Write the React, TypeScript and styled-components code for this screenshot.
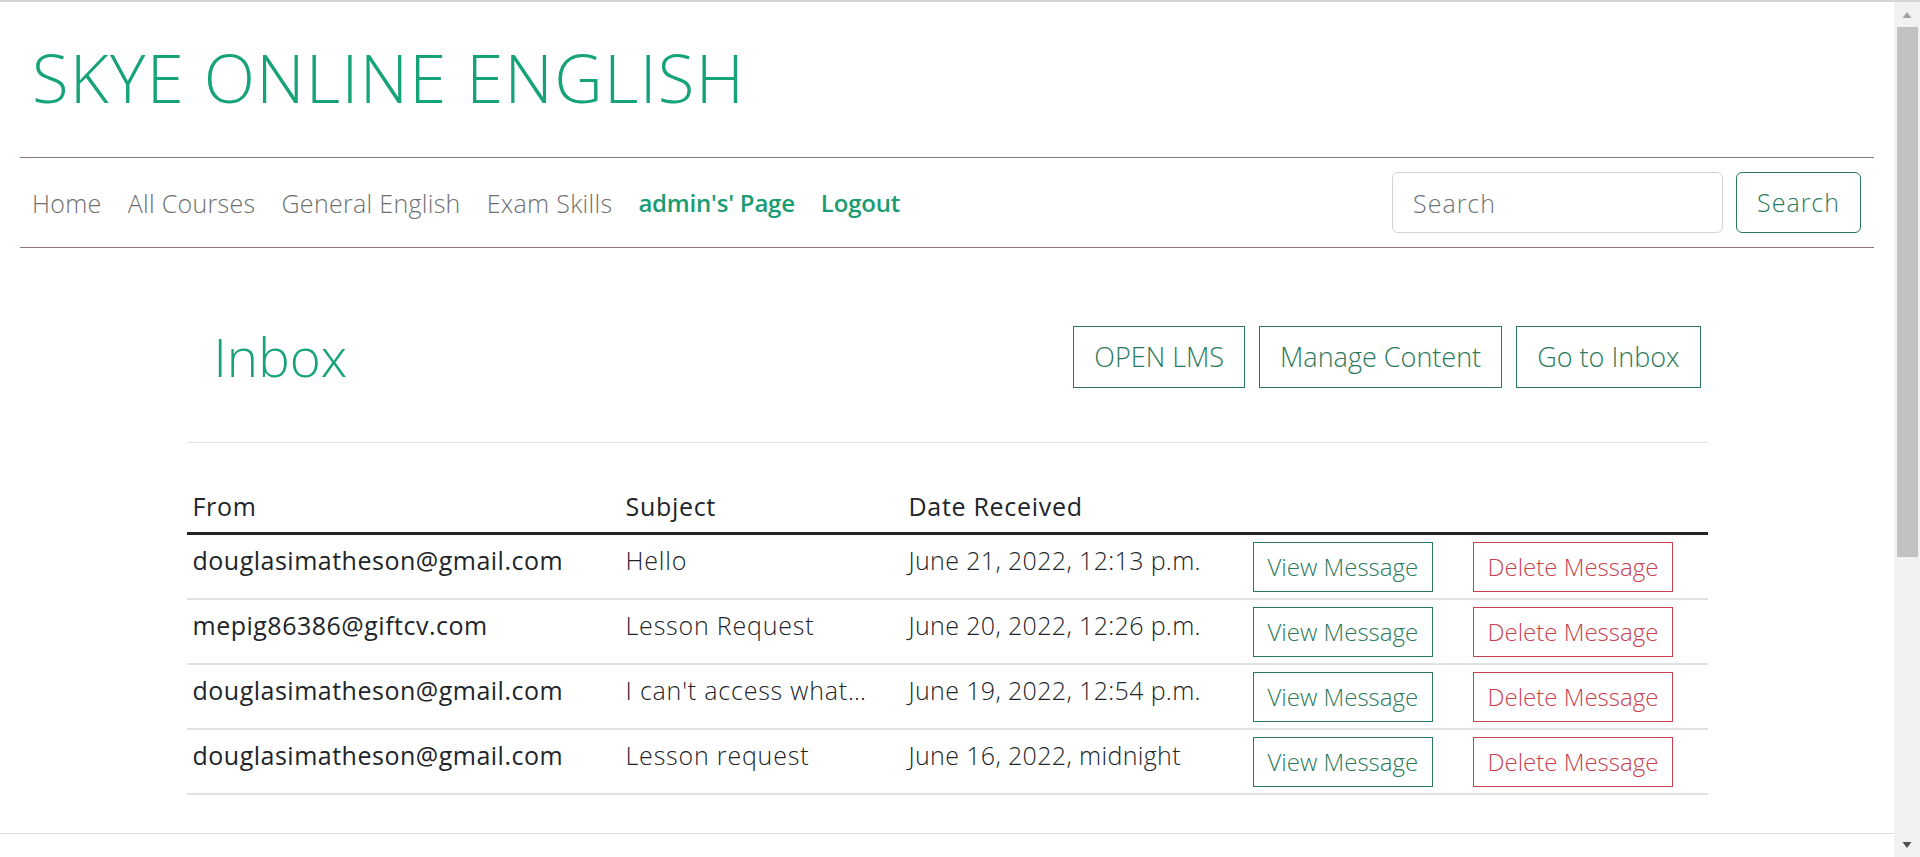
import React from "react";
import styled, { createGlobalStyle } from "styled-components";

const GlobalStyle = createGlobalStyle`
  html, body {
    margin: 0;
    padding: 0;
    overflow: hidden;
    background: #ffffff;
  }
  body {
    font-family: "Open Sans", "Liberation Sans", sans-serif;
    color: #212529;
  }
  * { box-sizing: border-box; }
`;

const Frame = styled.div`
  display: flex;
  width: 1920px;
  height: 857px;
  border-top: 2px solid #d3d3da;
  overflow: hidden;
`;

const Page = styled.div`
  flex: 1;
  min-width: 0;
  display: flex;
  flex-direction: column;
`;

const Header = styled.header`
  padding: 0 20px;
`;

const Title = styled.h1`
  margin: 0;
  padding: 35px 0 40px 12px;
  font-size: 67px;
  line-height: 80px;
  font-weight: 300;
  color: #17a37a;
  letter-spacing: 1.3px;
`;

const NavBar = styled.nav`
  display: flex;
  align-items: center;
  justify-content: space-between;
  height: 91px;
  padding: 0 13px 0 12px;
  border-top: 1px solid #8e7384;
  border-bottom: 1px solid #8e7384;
`;

const NavLinks = styled.div`
  display: flex;
  align-items: center;
  gap: 26px;
`;

const NavLink = styled.a<{ $active?: boolean }>`
  font-size: ${(p) => (p.$active ? "24px" : "25px")};
  line-height: 36px;
  font-weight: ${(p) => (p.$active ? 600 : 300)};
  color: ${(p) => (p.$active ? "#1a9c72" : "#707070")};
  text-decoration: none;
  letter-spacing: ${(p) => (p.$active ? "-0.2px" : "0.3px")};
`;

const SearchForm = styled.form`
  display: flex;
  align-items: center;
  gap: 13px;
`;

const SearchInput = styled.input`
  width: 331px;
  height: 61px;
  padding: 12px 20px;
  font-family: inherit;
  font-size: 25px;
  font-weight: 300;
  letter-spacing: 1px;
  border: 1px solid #d0d4d8;
  border-radius: 6px;
  outline: none;
  color: #212529;
  &::placeholder {
    color: #6c757d;
  }
`;

const OutlineButton = styled.button<{ $tone?: "green" | "red"; $variant?: "search" | "action" | "row" }>`
  font-family: inherit;
  font-weight: 300;
  background: #fff;
  color: ${(p) => (p.$tone === "red" ? "#c9404f" : "#2b7a5b")};
  border: 1px solid ${(p) => (p.$tone === "red" ? "#c9404f" : "#2b7a5b")};
  white-space: nowrap;
  cursor: pointer;
  ${(p) =>
    p.$variant === "search"
      ? `font-size: 25px; line-height: 37px; letter-spacing: 1px; padding: 11px 20px; border-radius: 6px;`
      : p.$variant === "row"
      ? `font-size: 24px; line-height: 36px; padding: 6px 14px; border-radius: 0;`
      : `font-size: 27px; line-height: 40px; padding: 10px 20px; border-radius: 0;`}
`;

const Main = styled.main`
  width: 1521px;
  margin: 0 auto;
`;

const TopRow = styled.div`
  display: flex;
  align-items: center;
  justify-content: space-between;
  padding: 78px 7px 0 27px;
`;

const Heading = styled.h2`
  margin: 0;
  font-size: 53px;
  line-height: 62px;
  font-weight: 300;
  color: #17a37a;
`;

const ActionGroup = styled.div`
  display: flex;
  gap: 14px;
`;

const Divider = styled.hr`
  margin: 54px 0 37px;
  border: 0;
  border-top: 1px solid #e2e2e2;
`;

const Table = styled.table`
  width: 100%;
  border-collapse: collapse;
  table-layout: fixed;
`;

const Th = styled.th`
  text-align: left;
  padding: 8px 6px 8px;
  font-size: 25px;
  line-height: 36px;
  font-weight: 500;
  letter-spacing: 0.7px;
  color: #212529;
  border-bottom: 3px solid #212529;
`;

const Td = styled.td<{ $kind?: "email" | "text" | "date" | "action" }>`
  vertical-align: top;
  padding: 7px 6px 6px;
  font-size: 25px;
  line-height: 36px;
  font-weight: ${(p) => (p.$kind === "email" ? 500 : 300)};
  letter-spacing: ${(p) => (p.$kind === "email" ? "0.5px" : p.$kind === "date" ? "0.35px" : "0.8px")};
  color: #212529;
  border-bottom: 2px solid #dee2e6;
  white-space: nowrap;
`;

const Clip = styled.span`
  display: inline-block;
  max-width: 245px;
  overflow: hidden;
  text-overflow: ellipsis;
  white-space: nowrap;
  vertical-align: top;
`;

const Footer = styled.footer`
  margin-top: 38px;
  border-top: 1px solid #e0e0e0;
  flex: 1;
`;

const Scrollbar = styled.div`
  width: 26px;
  flex: none;
  display: flex;
  flex-direction: column;
  align-items: center;
  background: #f1f1f1;
`;

const ArrowBox = styled.div`
  width: 100%;
  height: 25px;
  display: flex;
  align-items: center;
  justify-content: center;
  flex: none;
`;

const Thumb = styled.div`
  width: 21px;
  height: 530px;
  background: #c1c1c1;
  flex: none;
`;

const Track = styled.div`
  flex: 1;
`;

const messages = [
  { from: "douglasimatheson@gmail.com", subject: "Hello", date: "June 21, 2022, 12:13 p.m." },
  { from: "mepig86386@giftcv.com", subject: "Lesson Request", date: "June 20, 2022, 12:26 p.m." },
  { from: "douglasimatheson@gmail.com", subject: "I can't access what…", date: "June 19, 2022, 12:54 p.m." },
  { from: "douglasimatheson@gmail.com", subject: "Lesson request", date: "June 16, 2022, midnight" },
];

export default function App() {
  return (
    <>
      <GlobalStyle />
      <Frame>
        <Page>
          <Header>
            <Title>SKYE ONLINE ENGLISH</Title>
            <NavBar>
              <NavLinks>
                <NavLink href="#">Home</NavLink>
                <NavLink href="#">All Courses</NavLink>
                <NavLink href="#">General English</NavLink>
                <NavLink href="#">Exam Skills</NavLink>
                <NavLink href="#" $active>admin's' Page</NavLink>
                <NavLink href="#" $active>Logout</NavLink>
              </NavLinks>
              <SearchForm onSubmit={(e) => e.preventDefault()}>
                <SearchInput placeholder="Search" />
                <OutlineButton $variant="search" type="submit">Search</OutlineButton>
              </SearchForm>
            </NavBar>
          </Header>
          <Main>
            <TopRow>
              <Heading>Inbox</Heading>
              <ActionGroup>
                <OutlineButton $variant="action">OPEN LMS</OutlineButton>
                <OutlineButton $variant="action">Manage Content</OutlineButton>
                <OutlineButton $variant="action">Go to Inbox</OutlineButton>
              </ActionGroup>
            </TopRow>
            <Divider />
            <Table>
              <colgroup>
                <col style={{ width: 433 }} />
                <col style={{ width: 283 }} />
                <col style={{ width: 344 }} />
                <col style={{ width: 220 }} />
                <col style={{ width: 241 }} />
              </colgroup>
              <thead>
                <tr>
                  <Th>From</Th>
                  <Th>Subject</Th>
                  <Th>Date Received</Th>
                  <Th></Th>
                  <Th></Th>
                </tr>
              </thead>
              <tbody>
                {messages.map((m, i) => (
                  <tr key={i}>
                    <Td $kind="email">{m.from}</Td>
                    <Td $kind="text"><Clip>{m.subject}</Clip></Td>
                    <Td $kind="date">{m.date}</Td>
                    <Td $kind="action"><OutlineButton $variant="row">View Message</OutlineButton></Td>
                    <Td $kind="action"><OutlineButton $variant="row" $tone="red">Delete Message</OutlineButton></Td>
                  </tr>
                ))}
              </tbody>
            </Table>
          </Main>
          <Footer />
        </Page>
        <Scrollbar>
          <ArrowBox>
            <svg width="10" height="8" viewBox="0 0 10 8"><path d="M5 1 L9.5 7 H0.5 Z" fill="#a3a3a3" /></svg>
          </ArrowBox>
          <Thumb />
          <Track />
          <ArrowBox>
            <svg width="10" height="8" viewBox="0 0 10 8"><path d="M0.5 1 H9.5 L5 7 Z" fill="#505050" /></svg>
          </ArrowBox>
        </Scrollbar>
      </Frame>
    </>
  );
}
